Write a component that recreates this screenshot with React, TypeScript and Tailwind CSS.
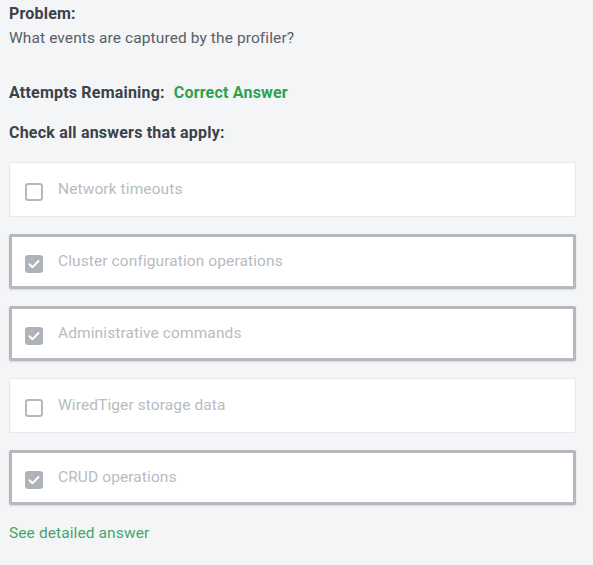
import React from "react";

interface Option {
  label: string;
  checked: boolean;
}

const options: Option[] = [
  { label: "Network timeouts", checked: false },
  { label: "Cluster configuration operations", checked: true },
  { label: "Administrative commands", checked: true },
  { label: "WiredTiger storage data", checked: false },
  { label: "CRUD operations", checked: true },
];

const CheckBox: React.FC<{ checked: boolean }> = ({ checked }) =>
  checked ? (
    <span className="flex h-[18px] w-[18px] items-center justify-center rounded-[3px] bg-[#aeb3b9]">
      <svg width="12" height="10" viewBox="0 0 12 10" fill="none">
        <path d="M1.5 5.2l3 3L10.5 2" stroke="#fff" strokeWidth="2" strokeLinecap="round" strokeLinejoin="round" />
      </svg>
    </span>
  ) : (
    <span className="block h-[18px] w-[18px] rounded-[3px] border-2 border-[#b4b8bd] bg-white" />
  );

export default function App() {
  return (
    <div className="min-h-[565px] w-[593px] bg-[#f4f5f7] px-[9px] pt-[4px] font-['Roboto',sans-serif]">
      <div className="text-[16px] font-bold leading-[20px] tracking-[0.2px] text-[#3b4249]">Problem:</div>
      <div className="mt-[2px] text-[15.5px] leading-[24px] tracking-[0.1px] text-[#585f65]">
        What events are captured by the profiler?
      </div>

      <div className="mt-[33px] flex gap-[9px] text-[16px] font-bold leading-[20px] tracking-[0.2px]">
        <span className="text-[#3b4249]">Attempts Remaining:</span>
        <span className="text-[#2ca24f]">Correct Answer</span>
      </div>

      <div className="mt-[20px] text-[16px] font-bold leading-[20px] tracking-[0.2px] text-[#3b4249]">
        Check all answers that apply:
      </div>

      <div className="mt-[19px] flex w-[567px] flex-col gap-[17px]">
        {options.map((opt) => (
          <div
            key={opt.label}
            className={
              opt.checked
                ? "flex h-[55px] items-center gap-[15px] rounded-[2px] border-[3px] border-[#b5b9be] bg-white pl-[13px] shadow-[0_1px_2px_rgba(0,0,0,0.12)]"
                : "flex h-[55px] items-center gap-[15px] rounded-[2px] border border-[#e6e8eb] bg-white pl-[15px]"
            }
          >
            <span className="mt-[4px]">
              <CheckBox checked={opt.checked} />
            </span>
            <span className="text-[15.5px] tracking-[0.1px] text-[#b8bbbf]">{opt.label}</span>
          </div>
        ))}
      </div>

      <div className="mt-[18px] pb-[20px] text-[15.5px] leading-[20px] tracking-[0.1px] text-[#45a66c]">
        See detailed answer
      </div>
    </div>
  );
}
